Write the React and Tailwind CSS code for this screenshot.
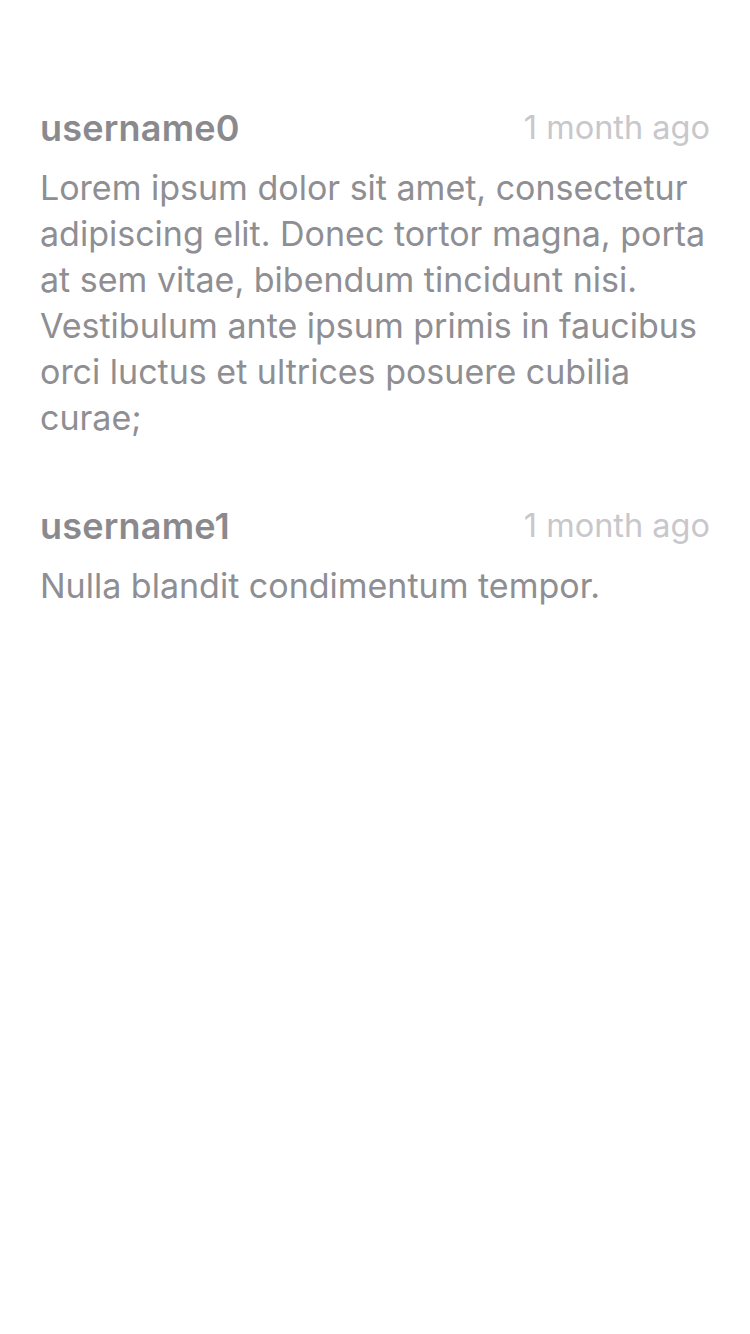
import React from 'react';

const comments = [
    {
        user: 'username0',
        time: '1 month ago',
        text: 'Lorem ipsum dolor sit amet, consectetur adipiscing elit. Donec tortor magna, porta at sem vitae, bibendum tincidunt nisi. Vestibulum ante ipsum primis in faucibus orci luctus et ultrices posuere cubilia curae;',
    },
    {
        user: 'username1',
        time: '1 month ago',
        text: 'Nulla blandit condimentum tempor.',
    },
];

const App = () => {
    return (
        <div className="min-h-[1334px] bg-white pt-[104px] px-10 font-['Inter',sans-serif]">
            <div className="flex flex-col gap-[61px]">
                {comments.map((c) => (
                    <div key={c.user} className="flex flex-col">
                        <div className="flex justify-between items-center h-12">
                            <p className="text-[36px] font-semibold text-[#8a8a8e] tracking-[0.2px]">{c.user}</p>
                            <p className="text-[32.5px] text-[#c7c7cc]">{c.time}</p>
                        </div>
                        <p className="mt-[13px] text-[34px] leading-[46px] text-[#8e8e93]">{c.text}</p>
                    </div>
                ))}
            </div>
        </div>
    );
};

export default App;
